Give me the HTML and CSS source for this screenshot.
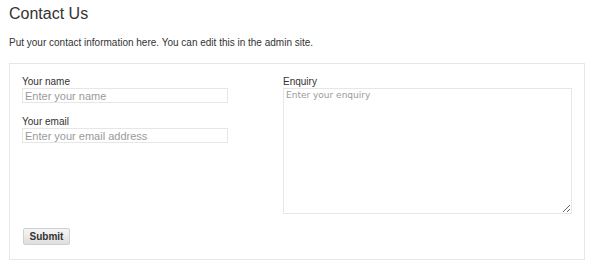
FILE: index.html
```html
<!DOCTYPE html>
<html lang="en">
  <head>
    <meta charset="UTF-8" />
    <title>Contact Us</title>
    <link rel="stylesheet" href="styles.css">
  </head>
  <body>
    <div class="page">
      <h1>Contact Us</h1>
      <p class="intro">Put your contact information here. You can edit this in the admin site.</p>

      <!-- Contact form -->
      <form class="contact-form">
        <div class="form-cols">
          <div class="col-left">
            <div class="field">
              <label>Your name</label>
              <input type="text" placeholder="Enter your name" />
            </div>
            <div class="field">
              <label>Your email</label>
              <input type="email" placeholder="Enter your email address" />
            </div>
          </div>
          <div class="col-right">
            <label>Enquiry</label>
            <textarea placeholder="Enter your enquiry"></textarea>
          </div>
        </div>
        <button class="btn" type="button">Submit</button>
      </form>
    </div>
  </body>
</html>
```

FILE: styles.css
```css
* {
  box-sizing: border-box;
}
html,
body {
  margin: 0;
  background: #ffffff;
}
body {
  font-family: "Liberation Sans", Arial, sans-serif;
  color: #333;
}
.page {
  padding: 4px 6px 0 9px;
}
h1 {
  font-size: 16px;
  font-weight: normal;
  line-height: 20px;
  margin: 0;
  color: #333;
}
.intro {
  font-size: 10px;
  line-height: 12px;
  margin: 13px 0 14px;
  color: #333;
}
.contact-form {
  border: 1px solid #e6e6e6;
  padding: 12px 12px 14px 12px;
  width: 576px;
}
.form-cols {
  display: grid;
  grid-template-columns: 261px 1fr;
}
label {
  display: block;
  font-size: 10px;
  line-height: 12px;
  color: #333;
}
.field {
  margin-bottom: 13px;
}
input[type="text"],
input[type="email"] {
  display: block;
  width: 206px;
  height: 15px;
  padding: 0 2px;
  margin: 0;
  border: 1px solid #e6e6e6;
  font-family: "Liberation Sans", Arial, sans-serif;
  font-size: 11px;
  outline: none;
}
::placeholder {
  color: #9a9a9a;
}
textarea {
  display: block;
  width: 289px;
  height: 126px;
  margin: 0;
  padding: 1px 2px;
  border: 1px solid #e6e6e6;
  font-family: "DejaVu Sans", Verdana, sans-serif;
  font-size: 9px;
  outline: none;
}
.btn {
  margin-top: 14px;
  margin-left: 1px;
  height: 17px;
  width: 47px;
  padding: 0;
  font-family: "Liberation Sans", Arial, sans-serif;
  font-size: 10px;
  font-weight: bold;
  color: #333;
  background: linear-gradient(#f6f6f6, #dedede);
  border: 1px solid #d0d0d0;
  border-radius: 2px;
  cursor: pointer;
}
```
